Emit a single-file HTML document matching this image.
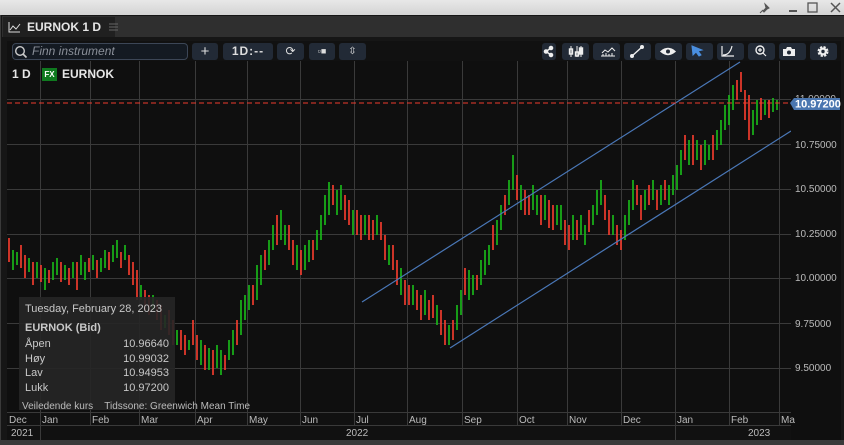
<!DOCTYPE html>
<html><head><meta charset="utf-8"><style>
*{margin:0;padding:0;box-sizing:border-box}
body{width:844px;height:445px;background:#3a3a3a;font-family:"Liberation Sans",sans-serif;overflow:hidden;position:relative}
#top{position:absolute;left:0;top:0;width:844px;height:15px;background:linear-gradient(#e8e8e8,#d4d4d4)}
#frame{position:absolute;left:1px;top:15px;width:843px;height:425px;background:#161616}
#tabbar{position:absolute;left:2px;top:16px;width:842px;height:21px;background:#2f2f2f}
#tab{position:absolute;left:3px;top:17px;width:112px;height:20px;background:#202020;color:#e6e6e6;font-weight:bold;font-size:12px;line-height:20px;padding-left:24px}
.tb{position:absolute;top:43px;height:17px;background:#222a36;border-radius:3px;color:#ddd;font-size:12px;text-align:center;line-height:17px}
#chart{position:absolute;left:7px;top:61px;width:834px;height:379px;background:#0f0f0f}
svg text{font-family:"Liberation Sans",sans-serif}
</style></head><body>
<div id="top"></div>
<svg style="position:absolute;left:756px;top:1px" width="88" height="14"><path d="M9 3l4 4-2 1-3 3-1-1 3-3z M7 9l-3 3" stroke="#555" fill="#555" stroke-width="1"/><rect x="33" y="9" width="8" height="2" fill="#555"/><rect x="52" y="2" width="9" height="9" fill="none" stroke="#555" stroke-width="1.3"/><path d="M75 2l9 9M84 2l-9 9" stroke="#555" stroke-width="1.5"/></svg>
<div id="frame"></div>
<div id="tabbar"></div>
<div id="tab">EURNOK 1 D</div>
<svg style="position:absolute;left:8px;top:21px" width="110" height="12"><path d="M1 1v10h11M2 9l3-4 3 3 4-5" stroke="#ddd" fill="none" stroke-width="1"/><path d="M101 3h10M101 6h10M101 9h10" stroke="#666"/></svg>
<div id="chart"></div>
<div style="position:absolute;left:7px;top:41px;width:834px;height:20px;background:#111"></div>
<div style="position:absolute;left:12px;top:43px;width:176px;height:17px;border:1px solid #3c4656;border-radius:4px;background:#141a22"></div>
<svg style="position:absolute;left:14px;top:45px" width="14" height="14"><circle cx="6" cy="6" r="4.3" stroke="#ccc" fill="none" stroke-width="1.4"/><path d="M9 9l3.5 3.5" stroke="#ccc" stroke-width="1.6"/></svg>
<div style="position:absolute;left:32px;top:44px;font-size:12px;font-style:italic;color:#8a8f98;line-height:15px">Finn instrument</div>
<div class="tb" style="left:192px;width:26px;font-size:15px">+</div>
<div class="tb" style="left:223px;width:50px;font-weight:bold;letter-spacing:1px">1D:--</div>
<div class="tb" style="left:277px;width:27px">⟳</div>
<div class="tb" style="left:309px;width:26px;font-size:9px">▫■</div>
<div class="tb" style="left:339px;width:27px;font-size:10px">⇳</div>
<div class="tb" style="left:542px;width:14px"></div>
<div class="tb" style="left:562px;width:27px"></div>
<div class="tb" style="left:593px;width:27px"></div>
<div class="tb" style="left:624px;width:27px"></div>
<div class="tb" style="left:655px;width:27px"></div>
<div class="tb" style="left:686px;width:27px"></div>
<div class="tb" style="left:717px;width:27px"></div>
<div class="tb" style="left:748px;width:27px"></div>
<div class="tb" style="left:779px;width:27px"></div>
<div class="tb" style="left:810px;width:27px"></div>
<svg style="position:absolute;left:540px;top:43px" width="300" height="17" fill="none" stroke="#eee" stroke-width="1.4">
<circle cx="6" cy="8.5" r="1.6" fill="#eee"/><circle cx="11" cy="5" r="1.6" fill="#eee"/><circle cx="11" cy="12" r="1.6" fill="#eee"/><path d="M6 8.5l5-3.5M6 8.5l5 3.5"/>
<path d="M31 3v11M37 3v11M41 3v11" stroke-width="1"/><rect x="29.5" y="6" width="3" height="5"/><rect x="35.5" y="9" width="3" height="4"/><rect x="39.5" y="5" width="3" height="6" fill="#eee"/>
<path d="M61 13h14M62 10l3-3 3 2 4-4 3 3M63 13v-2M66 13v-3M69 13v-2M72 13v-3" stroke-width="1"/>
<path d="M92 13l10-9"/><circle cx="92" cy="13" r="1.3" fill="#eee"/><circle cx="102" cy="4" r="1.3" fill="#eee"/>
<path d="M121 8.5q7-6 14 0q-7 6-14 0z" fill="#eee"/><circle cx="128" cy="8.5" r="2" fill="#222a36" stroke="none"/>
<path d="M152 3l10 4-4 1 3 4-2 1-3-4-3 3z" fill="#4a8fe0" stroke="#4a8fe0" stroke-width="1"/>
<path d="M182 3v10h12M183 12q7 0 9-9" stroke-width="1.2"/>
<circle cx="220" cy="7" r="4"/><path d="M223 10l3 3M218 7h4M220 5v4" stroke-width="1.2"/>
<path d="M243 6h3l1-2h4l1 2h3v7h-12z" fill="#eee" stroke="none"/><circle cx="249" cy="9.5" r="2" fill="#222a36" stroke="none"/>
<circle cx="283" cy="8.5" r="4" fill="#eee" stroke="#eee" stroke-width="3" stroke-dasharray="2 1.2"/><circle cx="283" cy="8.5" r="1.7" fill="#222a36" stroke="none"/>
</svg>
<svg style="position:absolute;left:0;top:0" width="844" height="445">
<g stroke="#3a3a3a" stroke-width="1">
<path d="M40.5 61V412M90.5 61V412M139.5 61V412M195.5 61V412M247.5 61V412M300.5 61V412M354.5 61V412M407.5 61V412M462.5 61V412M517.5 61V412M567.5 61V412M621.5 61V412M675.5 61V412M729.5 61V412M779.5 61V412"/>
<path d="M7 99.5H791M7 144.5H791M7 189.5H791M7 234.5H791M7 278.5H791M7 323.5H791M7 368.5H791"/>
</g>
<path stroke="#19b519" stroke-width="1.7" fill="none" d="M13 250V270M17 252V265M29 258V272M37 262V278M45 268V290M53 262V280M57 258V275M65 265V280M73 262V278M81 255V275M85 262V280M93 255V270M101 258V272M105 250V268M113 245V262M117 240V258M125 245V260M141 285V300M153 295V310M165 315V328M177 330V345M189 340V350M201 340V365M209 348V370M217 345V368M221 350V375M229 340V360M233 330V355M241 300V335M245 295V320M249 285V310M257 265V300M261 255V285M269 240V265M273 225V250M281 210V240M285 225V245M297 245V270M305 245V270M309 240V262M317 230V250M321 215V240M325 195V225M329 182V215M337 190V215M341 185V210M353 210V235M365 215V235M377 215V235M389 245V265M401 268V295M413 285V305M425 290V315M437 305V325M449 325V345M457 305V330M461 290V315M469 270V300M473 275V295M481 260V285M485 250V275M489 245V265M497 220V245M501 205V230M509 180V205M513 155V190M521 185V210M533 185V210M537 195V215M545 195V220M557 205V225M561 205V230M573 215V240M581 215V235M585 225V245M593 205V225M597 190V215M601 180V205M613 215V235M625 215V240M629 200V225M633 180V210M645 190V210M653 180V200M661 185V205M669 185V205M673 175V195M677 165V190M681 150V175M689 140V165M697 140V160M705 140V165M709 145V160M717 130V150M721 120V145M725 105V130M729 95V125M733 85V110M753 110V135M757 100V125M765 100V115M773 98V112M777 100V110"/>
<path stroke="#ee3b2d" stroke-width="1.7" fill="none" d="M9 238V262M21 245V268M25 255V278M33 262V285M41 265V282M49 270V283M61 262V282M69 268V285M77 262V290M89 258V272M97 260V278M109 252V270M121 252V268M129 255V275M133 262V285M137 270V300M145 290V310M149 295V315M157 300V320M161 305V330M169 310V335M173 320V345M181 330V350M185 335V355M193 320V345M197 335V360M205 345V370M213 350V375M225 355V370M237 320V345M253 285V305M265 250V270M277 215V245M289 225V250M293 240V265M301 250V275M313 240V260M333 185V205M345 195V220M349 200V225M357 210V235M361 215V240M369 215V240M373 220V240M381 222V240M385 235V260M393 245V270M397 260V285M405 280V305M409 285V305M417 290V310M421 295V320M429 300V320M433 295V318M441 310V335M445 320V345M453 320V340M465 268V295M477 275V290M493 225V250M505 195V215M517 175V200M525 190V215M529 195V215M541 195V225M549 200V228M553 205V230M565 220V245M569 225V250M577 220V240M589 210V232M605 195V220M609 210V235M617 225V245M621 230V250M637 185V205M641 195V220M649 185V205M657 190V210M665 180V200M685 135V160M693 135V165M701 145V170M713 135V160M737 80V100M741 72V92M745 90V120M749 95V140M761 98V120M769 100V118"/>
<line x1="362" y1="302" x2="740" y2="62" stroke="#4a78b8" stroke-width="1.2"/>
<line x1="450" y1="348" x2="791" y2="131" stroke="#4a78b8" stroke-width="1.2"/>
<line x1="7" y1="103" x2="790" y2="103" stroke="#ee3b2d" stroke-dasharray="5 3"/>
<rect x="791" y="61" width="50" height="379" fill="#0f0f0f"/>
<g font-size="10" fill="#bbb">
<text x="795" y="102">11.00000</text>
<text x="795" y="148">10.75000</text>
<text x="795" y="192">10.50000</text>
<text x="795" y="237">10.25000</text>
<text x="795" y="281">10.00000</text>
<text x="795" y="327">9.75000</text>
<text x="795" y="371">9.50000</text>
</g>
<path d="M790 103l4-5h46v12h-46z" fill="#4a76b0"/><text x="795" y="107.5" font-size="11" font-weight="bold" fill="#fff">10.97200</text>
<rect x="7" y="412" width="784" height="28" fill="#111"/>
<g stroke="#3a3a3a"><path d="M7 412.5H791M7 425.5H791M40.5 412V440M90.5 412V425M139.5 412V425M195.5 412V425M247.5 412V425M300.5 412V425M354.5 412V425M407.5 412V425M462.5 412V425M517.5 412V425M567.5 412V425M621.5 412V425M675.5 412V440M729.5 412V425M779.5 412V425"/></g>
<g font-size="10" fill="#bbb">
<text x="9" y="423">Dec</text><text x="42" y="423">Jan</text><text x="92" y="423">Feb</text><text x="141" y="423">Mar</text><text x="197" y="423">Apr</text><text x="249" y="423">May</text><text x="302" y="423">Jun</text><text x="356" y="423">Jul</text><text x="409" y="423">Aug</text><text x="464" y="423">Sep</text><text x="519" y="423">Oct</text><text x="569" y="423">Nov</text><text x="623" y="423">Dec</text><text x="677" y="423">Jan</text><text x="731" y="423">Feb</text><text x="781" y="423">Ma</text>
<text x="11" y="436">2021</text><text x="346" y="436">2022</text><text x="748" y="436">2023</text>
</g>
</svg>
<div style="position:absolute;left:12px;top:67px;color:#e6e6e6;font-size:12px;font-weight:bold">1 D</div>
<div style="position:absolute;left:42px;top:68px;width:15px;height:13px;background:#0f7a1f;color:#fff;font-size:8px;font-weight:bold;text-align:center;line-height:13px">FX</div>
<div style="position:absolute;left:62px;top:67px;color:#e6e6e6;font-size:12px;font-weight:bold">EURNOK</div>
<div style="position:absolute;left:19px;top:297px;width:156px;height:113px;background:rgba(38,38,38,0.9);font-size:11px;color:#c8c8c8;line-height:14.5px;padding:5px 0 0 6px">
<div>Tuesday, February 28, 2023</div>
<div style="font-weight:bold;margin-top:4px">EURNOK (Bid)</div>
<div style="margin-top:2px">Åpen<span style="float:right;margin-right:6px">10.96640</span></div>
<div>Høy<span style="float:right;margin-right:6px">10.99032</span></div>
<div>Lav<span style="float:right;margin-right:6px">10.94953</span></div>
<div>Lukk<span style="float:right;margin-right:6px">10.97200</span></div>
</div>
<div style="position:absolute;left:22px;top:401px;font-size:10px;color:#bbb">Veiledende kurs &nbsp;&nbsp;&nbsp;Tidssone: Greenwich Mean Time</div>
</body></html>
